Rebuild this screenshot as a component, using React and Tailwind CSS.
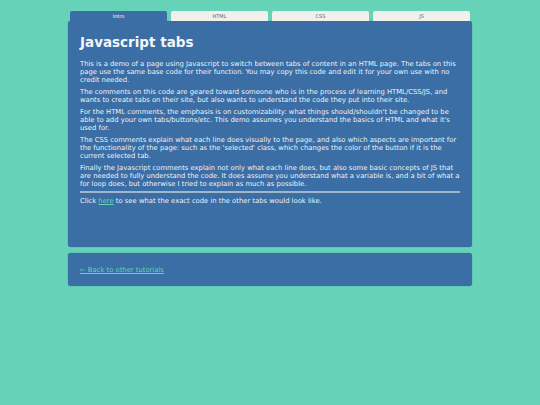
import React, { useState } from 'react';

const tabs = ['Intro', 'HTML', 'CSS', 'JS'];

const App = () => {
  const [active, setActive] = useState(0);

  return (
    <div className="min-h-screen bg-[#66d3b8] pt-[11px] font-['DejaVu_Sans',sans-serif]">
      <div className="w-[404px] mx-auto">
        {/* --- TAB BUTTONS --- */}
        <div className="flex gap-[4px] px-[2px]">
          {tabs.map((t, i) => (
            <button
              key={t}
              onClick={() => setActive(i)}
              className={
                i === active
                  ? 'flex-1 h-[10px] rounded-t-[2px] bg-[#3a6ea5] text-white text-[5px] leading-[10px]'
                  : 'flex-1 h-[10px] rounded-t-[2px] bg-[#f1f0ec] text-[#5a6470] text-[5px] leading-[10px]'
              }
            >
              {t}
            </button>
          ))}
        </div>

        {/* --- MAIN PANEL --- */}
        <div className="h-[226px] rounded-[3px] bg-[#3a6ea5] shadow-[0_0_1px_#2c5a8a] px-[12px] pt-[12px] text-[#eef2f8] text-[6.8px] leading-[8px]">
          <h1 className="text-[13.5px] font-bold leading-[18px] mb-[9px] text-[#f2f5fa]">Javascript tabs</h1>
          <p className="mb-[4px]">
            This is a demo of a page using Javascript to switch between tabs of content in an HTML page. The tabs on this page use the same base code for their function. You may copy this code and edit it for your own use with no credit needed.
          </p>
          <p className="mb-[4px]">
            The comments on this code are geared toward someone who is in the process of learning HTML/CSS/JS, and wants to create tabs on their site, but also wants to understand the code they put into their site.
          </p>
          <p className="mb-[4px]">
            For the HTML comments, the emphasis is on customizability: what things should/shouldn't be changed to be able to add your own tabs/buttons/etc. This demo assumes you understand the basics of HTML and what it's used for.
          </p>
          <p className="mb-[4px]">
            The CSS comments explain what each line does visually to the page, and also which aspects are important for the functionality of the page: such as the 'selected' class, which changes the color of the button if it is the current selected tab.
          </p>
          <p>
            Finally the Javascript comments explain not only what each line does, but also some basic concepts of JS that are needed to fully understand the code. It does assume you understand what a variable is, and a bit of what a for loop does, but otherwise I tried to explain as much as possible.
          </p>
          <hr className="mt-[3px] mb-[4px] border-0 border-t-[2px] border-[#9fb6cf]" />
          <p>
            Click <a href="#" className="text-[#66d3b8] underline">here</a> to see what the exact code in the other tabs would look like.
          </p>
        </div>

        {/* --- FOOTER PANEL --- */}
        <div className="mt-[6px] h-[33px] rounded-[3px] bg-[#3a6ea5] shadow-[0_0_1px_#2c5a8a] px-[12px] flex items-center text-[6.8px] leading-[8px]">
          <a href="#" className="text-[#66d3b8] underline">⇐ Back to other tutorials</a>
        </div>
      </div>
    </div>
  );
};

export default App;
